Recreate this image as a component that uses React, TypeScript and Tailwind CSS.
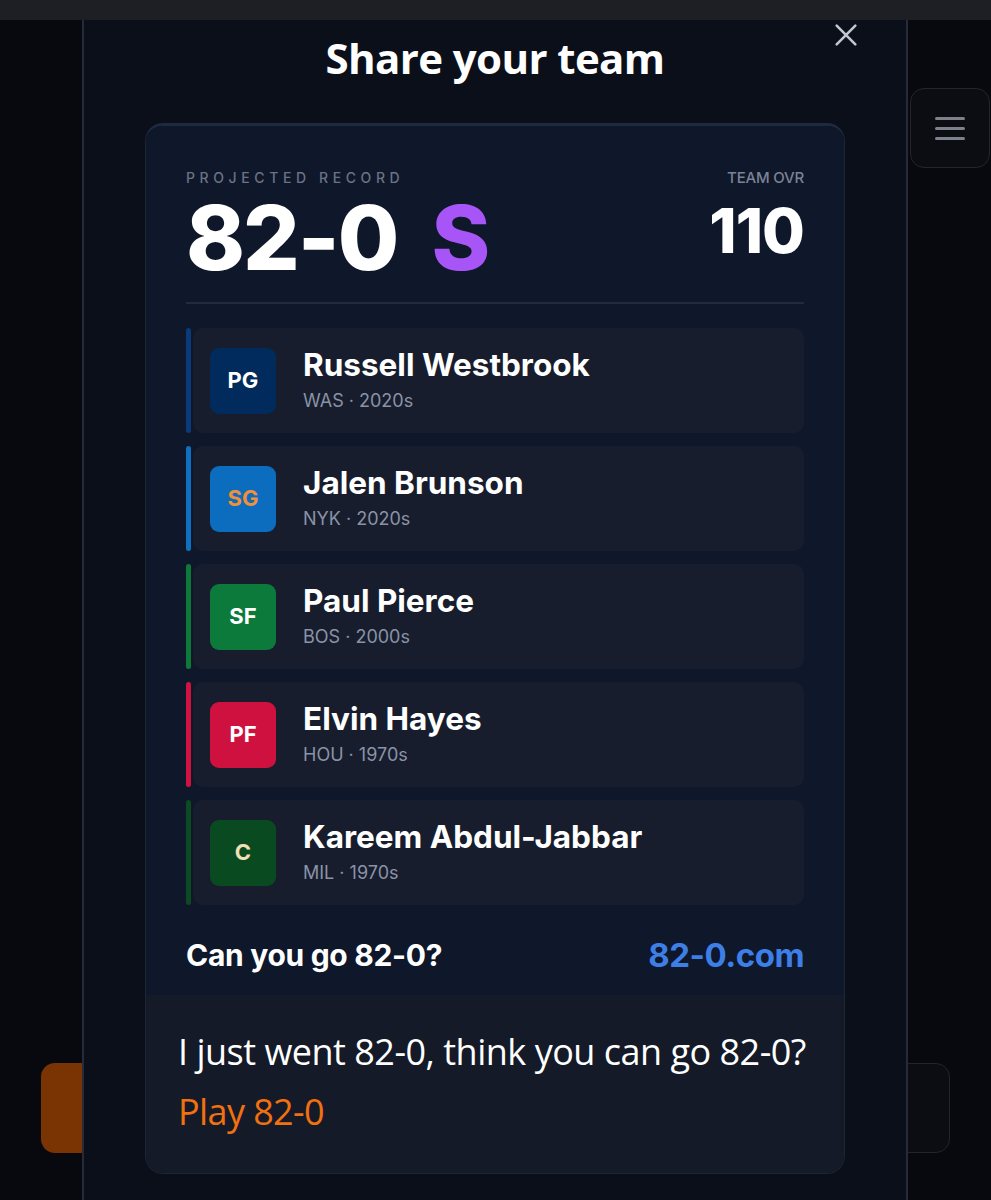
import React from "react";

type Player = {
  pos: string;
  name: string;
  team: string;
  era: string;
  bar: string;
  badgeBg: string;
  badgeText: string;
};

const players: Player[] = [
  { pos: "PG", name: "Russell Westbrook", team: "WAS", era: "2020s", bar: "bg-[#0b3a7a]", badgeBg: "bg-[#002b5c]", badgeText: "text-white" },
  { pos: "SG", name: "Jalen Brunson", team: "NYK", era: "2020s", bar: "bg-[#0f6fc0]", badgeBg: "bg-[#0c6cbd]", badgeText: "text-[#f0903a]" },
  { pos: "SF", name: "Paul Pierce", team: "BOS", era: "2000s", bar: "bg-[#0e7a3a]", badgeBg: "bg-[#0b7a3a]", badgeText: "text-white" },
  { pos: "PF", name: "Elvin Hayes", team: "HOU", era: "1970s", bar: "bg-[#d01240]", badgeBg: "bg-[#cf1140]", badgeText: "text-white" },
  { pos: "C", name: "Kareem Abdul-Jabbar", team: "MIL", era: "1970s", bar: "bg-[#0b4a22]", badgeBg: "bg-[#0a4a20]", badgeText: "text-[#eee0b8]" },
];

const inter = "font-['Inter','Liberation_Sans',sans-serif]";
const humanist = "font-['Open_Sans','Noto_Sans',sans-serif]";

function PlayerRow({ p }: { p: Player }) {
  return (
    <div className="flex h-[105px] gap-[2px]">
      <div className={`w-[5px] rounded-full ${p.bar}`} />
      <div className="flex flex-1 items-center gap-[27px] rounded-[10px] bg-[#171d2d] pl-[17px]">
        <div className={`flex h-[66px] w-[66px] items-center justify-center rounded-[9px] ${p.badgeBg}`}>
          <span className={`${inter} text-[22px] font-bold ${p.badgeText}`}>{p.pos}</span>
        </div>
        <div className="flex flex-col pb-[2px]">
          <span className={`${inter} text-[31.5px] font-bold leading-[38px] tracking-[0px] text-white`}>{p.name}</span>
          <span className={`${inter} mt-[4px] text-[18px] leading-[26px] text-[#8a93a6]`}>
            {p.team} · {p.era}
          </span>
        </div>
      </div>
    </div>
  );
}

export default function App() {
  return (
    <div className="relative h-[1200px] w-[991px] overflow-hidden bg-[#08090e]">
      {/* browser strip */}
      <div className="h-[20px] bg-[#1e1f24]" />

      {/* page underneath the dialog */}
      <div className="flex h-[1180px] flex-col">
        <div className="flex justify-end pr-[1px] pt-[68px]">
          <div className="flex h-[80px] w-[80px] flex-col items-center justify-center gap-[7px] rounded-[14px] border border-[#23252e] bg-[#0c0d12]">
            <div className="h-[3px] w-[30px] rounded-full bg-[#7c818b]" />
            <div className="h-[3px] w-[30px] rounded-full bg-[#7c818b]" />
            <div className="h-[3px] w-[30px] rounded-full bg-[#7c818b]" />
          </div>
        </div>
        <div className="mt-auto flex gap-[20px] px-[41px] pb-[47px]">
          <div className="h-[90px] flex-1 rounded-[14px] bg-[#7a3404]" />
          <div className="h-[90px] flex-1 rounded-[14px] border border-[#23252e] bg-[#0c0d12]" />
        </div>
      </div>

      {/* share dialog */}
      <div className="absolute bottom-0 left-[82px] top-[20px] w-[826px] border-x-2 border-[#262b39] bg-[#0b0f1a]">
        <button className="absolute right-[46px] top-[1px] text-[#c3c7cf]">
          <svg width="28" height="28" viewBox="0 0 24 24" fill="none" stroke="currentColor" strokeWidth="2.2" strokeLinecap="round">
            <path d="M4 4L20 20M20 4L4 20" />
          </svg>
        </button>

        <h2 className={`${humanist} pt-[12px] text-center text-[42px] font-bold leading-[52px] tracking-[-0.6px] text-white`}>
          Share your team
        </h2>

        <div className="mx-auto mt-[39px] w-[700px] overflow-hidden rounded-[18px] border border-[#1e2535] border-t-[3px] border-t-[#1f2a3e]">
          {/* score card */}
          <div className="bg-[#0f172a] px-[40px] pb-[20px] pt-[44px]">
            <div className="flex items-start justify-between">
              <div>
                <div className={`${inter} text-[14px] font-medium leading-[16px] tracking-[4.6px] text-[#6b7385]`}>PROJECTED RECORD</div>
                <div className={`${inter} mt-[7px] flex items-baseline gap-[34px] text-[89px] font-extrabold leading-[90px] tracking-[-2px]`}>
                  <span className="text-white">82-0</span>
                  <span className="text-[#a855f7]">S</span>
                </div>
              </div>
              <div className="flex flex-col items-end">
                <div className={`${inter} text-[15px] font-medium leading-[16px] tracking-[-0.2px] text-[#7b8395]`}>TEAM OVR</div>
                <div className={`${inter} mt-[13px] text-[62px] font-extrabold leading-[64px] tracking-[-1px] text-white`}>110</div>
              </div>
            </div>

            <div className="mt-[19px] h-[2px] bg-[#222b3b]" />

            <div className="mt-[24px] flex flex-col gap-[13px]">
              {players.map((p) => (
                <PlayerRow key={p.pos} p={p} />
              ))}
            </div>

            <div className="mt-[30px] flex items-center justify-between">
              <span className={`${inter} text-[30px] font-bold leading-[40px] tracking-[-0.3px] text-white`}>Can you go 82-0?</span>
              <span className={`${inter} text-[33px] font-bold leading-[40px] tracking-[-0.5px] text-[#3d7fe6]`}>82-0.com</span>
            </div>
          </div>

          {/* message preview */}
          <div className="bg-[#141a28] px-[32px] pb-[31px] pt-[27px]">
            <p className={`${humanist} text-[36px] leading-[60px] tracking-[-0.5px] text-white`}>
              I just went 82-0, think you can go 82-0?
            </p>
            <p className={`${humanist} text-[36px] leading-[60px] tracking-[-0.6px] text-[#f2700f]`}>Play 82-0</p>
          </div>
        </div>
      </div>
    </div>
  );
}
